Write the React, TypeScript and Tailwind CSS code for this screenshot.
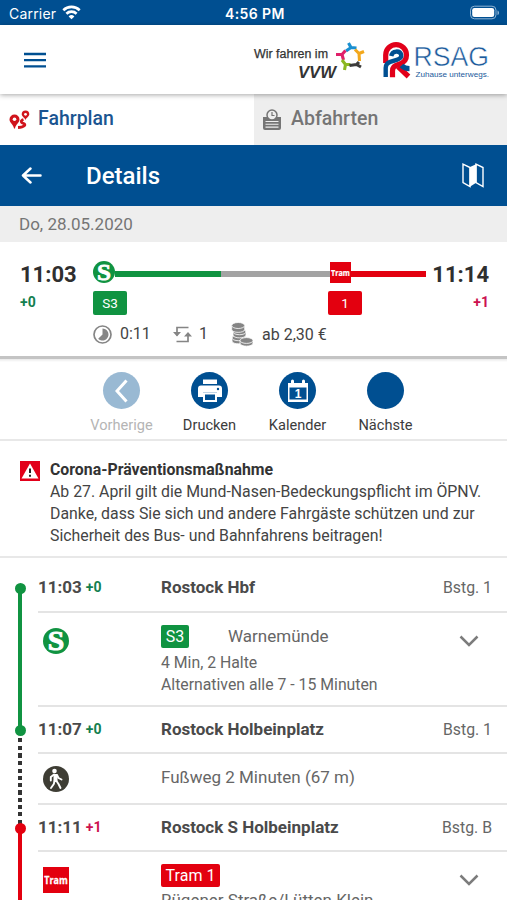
import type { ReactNode } from "react";
import clsx from "clsx";

function StatusBar() {
  return (
    <div className="flex h-[25px] items-center bg-[#004f91] pr-[6px] pl-[9px] font-['Inter',sans-serif] text-white">
      <div className="flex w-[216px] items-center gap-[6px]">
        <span className="pt-[2px] text-[14px] leading-5 tracking-[0.2px]">Carrier</span>
        <svg width="19" height="15" viewBox="0 0 19 15" fill="none" stroke="white" strokeWidth="2.6">
          <path d="M1.3 5.2a11.8 11.8 0 0 1 16.4 0" />
          <path d="M4.4 8.7a7.3 7.3 0 0 1 10.2 0" />
          <path d="M9.5 14.3 6.6 11.4a4.1 4.1 0 0 1 5.8 0Z" fill="white" stroke="none" />
        </svg>
      </div>
      <span className="pt-[2px] text-[14px] font-semibold leading-5 tracking-[0.4px]">4:56 PM</span>
      <div className="flex flex-1 justify-end">
        <svg width="31" height="15" viewBox="0 0 31 15">
          <rect x="0.5" y="1.2" width="25.500" height="12.6" rx="4" fill="none" stroke="#8fb4d4" strokeWidth="1" />
          <rect x="2.200" y="3" width="22" height="9" rx="2.2" fill="white" />
          <path d="M27.500 5.500c2 .6 2 4 0 4.600Z" fill="#8fb4d4" />
        </svg>
      </div>
    </div>
  );
}

function Logos() {
  return (
    <svg width="244" height="50" viewBox="250 34 244 50" fill="none">
      <g fontFamily="Liberation Sans, sans-serif">
        <text x="254" y="56.5" fontSize="12" fill="#333" stroke="#333" strokeWidth="0.25" textLength="74" lengthAdjust="spacingAndGlyphs">Wir fahren im</text>
        <text x="298" y="77" fontSize="17" fontWeight="bold" fontStyle="italic" fill="#333" textLength="38" lengthAdjust="spacingAndGlyphs">VVW</text>
        <text x="413.500" y="65.300" fontSize="27" fill="#1b5a9b" stroke="white" strokeWidth="0.500" textLength="75.500" lengthAdjust="spacingAndGlyphs">RSAG</text>
        <text x="415.500" y="76" fontSize="8" fill="#1b5a9b" textLength="73.500" lengthAdjust="spacingAndGlyphs">Zuhause unterwegs.</text>
      </g>
      <g strokeWidth="3.1" strokeLinejoin="round">
        <path d="M348.500 42 351 46.500 346 50M351 46.500 356.500 47" stroke="#1a8fd0" />
        <path d="M336 53.500 342 53.500 345.500 49.500M342 53.500 343.500 59" stroke="#e0206a" />
        <path d="M344.500 69 345.500 63.500 342 59M345.500 63.500 350.500 63.500" stroke="#8cb822" />
        <path d="M361 66 356.500 63.500 349.500 64.500M356.500 63.500 359 61" stroke="#3c3c3b" />
        <path d="M364 50.500 359 52.500 355 48.500M359 52.500 359.500 60" stroke="#f3a81c" />
      </g>
      <g strokeWidth="5.2">
        <path d="M385.700 62V54a10.300 10.300 0 0 1 20.800 0c0 5-3 8-7.500 9.300-5 1.500-6.500 3-6.500 7v6" stroke="#e2001a" />
        <path d="M398 65.500 408.500 75.500" stroke="#e2001a" />
        <path d="M385.700 76V67c0-3 1-5 4.500-6.200l6.500-2c3.500-1 5-2.500 4.500-5-1.200-4.500-9-4.500-10 1.200" stroke="#004f91" strokeWidth="4.400" />
        <path d="M401.500 64.500c2 2 4.500 3.200 8 3.200" stroke="#004f91" />
      </g>
    </svg>
  );
}

function Header() {
  return (
    <header className="relative z-10 flex h-[69px] items-center justify-between bg-white pr-[13px] pl-6 shadow-[0_1px_5px_rgba(0,0,0,0.35)]">
      <svg width="22" height="16" viewBox="0 0 22 16" stroke="#004f91" strokeWidth="2.300">
        <path d="M0 2h22M0 8.200h22M0 14.300h22" />
      </svg>
      <Logos />
    </header>
  );
}

function Tabs() {
  return (
    <nav className="flex h-[51px] text-[19.500px] font-medium">
      <div className="flex w-[254px] items-center gap-[8px] bg-white pl-[9px] text-[#1b5591]">
        <svg width="21" height="20" viewBox="0 0 21 20">
          <path d="M5.500 4.500a5 5 0 0 0-5 5c0 3.500 4 5 4.500 9h1c.5-4 4.500-5.500 4.500-9a5 5 0 0 0-5-5Z" fill="#d0141c" />
          <circle cx="5.500" cy="9.200" r="1.800" fill="white" />
          <path d="M16.500.5a3.800 3.800 0 0 0-3.800 3.800c0 2.400 3.300 3.500 3.800 6 .5-2.500 3.800-3.600 3.800-6A3.800 3.800 0 0 0 16.500.5Z" fill="#d0141c" />
          <circle cx="16.500" cy="4.300" r="1.400" fill="white" />
          <path d="M14.500 9.500c-3 1-3 3 .2 4 2.500 1 1 3.700-5.700 4" fill="none" stroke="#d0141c" strokeWidth="2.800" />
        </svg>
        <span className="-mt-[2px]">Fahrplan</span>
      </div>
      <div className="flex flex-1 items-center gap-[10px] bg-[#eee] pl-[9px] text-[#757575]">
        <svg width="18" height="21" viewBox="0 0 18 21">
          <path d="M0 8h18v11a2 2 0 0 1-2 2H2a2 2 0 0 1-2-2Z" fill="#757575" />
          <circle cx="9" cy="6" r="5" fill="#eee" stroke="#757575" strokeWidth="1.500" />
          <path d="M9 3v3.500h2.500" fill="none" stroke="#757575" strokeWidth="1.200" />
          <path d="M2.500 12.500h13M2.500 15.300h13M2.500 18.100h13" stroke="#eee" strokeWidth="1.100" />
        </svg>
        <span className="-mt-[2px]">Abfahrten</span>
      </div>
    </nav>
  );
}

function TitleBar() {
  return (
    <div className="flex h-[61px] items-center bg-[#004f91] pr-[23px] pl-[21px] text-white">
      <svg width="21" height="17" viewBox="0 0 21 17" fill="none" stroke="white" strokeWidth="2.500" strokeLinecap="round" strokeLinejoin="round">
        <path d="M9.500 1.500 2 8.500l7.500 7M2 8.500h17.500" />
      </svg>
      <h1 className="ml-[44px] flex-1 text-[24px] font-medium leading-8">Details</h1>
      <svg width="22" height="25" viewBox="0 0 22 25" fill="none" stroke="white" strokeWidth="1.400">
        <path d="M1 1.200 8 4.500v19L1 19.500ZM14 1.200l7 3.300v19l-7-4Z" />
        <path d="M7.500 4.300 14.500 1v18.500l-7 4.500Z" fill="white" stroke="none" />
      </svg>
    </div>
  );
}

function SBahn({ size }: { size: number }) {
  return (
    <svg width={size} height={size} viewBox="0 0 26 26" className="block shrink-0">
      <circle cx="13" cy="13" r="13" fill="#109341" />
      <text x="4.800" y="22" fontSize="27" fontWeight="bold" fontFamily="Liberation Serif, serif" fill="white" stroke="white" strokeWidth="0.900" textLength="16.500" lengthAdjust="spacingAndGlyphs">S</text>
    </svg>
  );
}

function TramSign({ size }: { size: number }) {
  return (
    <svg width={size} height={size} viewBox="0 0 26 26" className="block shrink-0">
      <rect width="26" height="26" fill="#e3000f" />
      <text x="1.300" y="17" fontSize="11.200" fontWeight="bold" fontFamily="Open Sans, sans-serif" fill="white" stroke="white" strokeWidth="0.300" textLength="23.400" lengthAdjust="spacingAndGlyphs">Tram</text>
    </svg>
  );
}

function Summary() {
  return (
    <section className="h-[117px] border-b-[3px] border-[#c4c4c4] bg-white">
      <div className="flex pt-[19px] pr-[18px] pl-[20px]">
        <div className="w-[73px]">
          <div className="text-[22px] font-bold leading-[28px] text-[#2f2f2f]">11:03</div>
          <div className="mt-[6px] text-[14px] font-bold leading-[14px] text-[#137f4f]">+0</div>
        </div>
        <div className="w-[333px]">
          <div className="flex h-[22px] items-center">
            <SBahn size={22} />
            <div className="mt-[3px] h-[6px] w-[106px] bg-[#109341]" />
            <div className="mt-[3px] h-[6px] w-[109px] bg-[#a3a3a3]" />
            <TramSign size={21} />
            <div className="mt-[3px] h-[6px] flex-1 bg-[#e3000f]" />
          </div>
          <div className="mt-[8px] flex h-[24px] gap-[201px] text-[13.500px] leading-[24px] text-white">
            <div className="w-[34px] rounded-[2px] bg-[#109341] text-center">S3</div>
            <div className="w-[34px] rounded-[2px] bg-[#e3000f] text-center">1</div>
          </div>
        </div>
        <div className="flex-1 text-right">
          <div className="text-[22px] font-bold leading-[28px] text-[#2f2f2f]">11:14</div>
          <div className="mt-[6px] text-[14px] font-bold leading-[14px] text-[#cc1150]">+1</div>
        </div>
      </div>
      <div className="mt-[5px] flex h-[28px] items-center pl-[93px] text-[16px] text-[#444]">
        <svg width="19" height="19" viewBox="0 0 19 19">
          <circle cx="9.500" cy="9.500" r="8.500" fill="none" stroke="#858585" strokeWidth="1.700" />
          <path d="M9.500 3.500a6 6 0 1 1-4.300 10.200L9.500 9.500Z" fill="#858585" />
        </svg>
        <span className="ml-[8px] w-[53px]">0:11</span>
        <svg width="19" height="17" viewBox="0 0 19 17" fill="none" stroke="#858585" strokeWidth="1.700">
          <path d="M15.500 1.500H4v8M3.500 15.500h11.500v-8" />
          <path d="M0 6h8L4 10.500ZM11 10.500h8L15 6Z" fill="#858585" stroke="none" />
        </svg>
        <span className="ml-[7px] w-[32px]">1</span>
        <svg width="23" height="25" viewBox="0 0 23 25" fill="#858585" stroke="white" strokeWidth="0.800">
          <path d="M1 16v3c0 3.800 13 3.800 13 0v-3Z" />
          <ellipse cx="7.500" cy="16" rx="6.500" ry="2.700" />
          <path d="M2 10v3c0 3.800 13 3.800 13 0v-3Z" />
          <ellipse cx="8.500" cy="10" rx="6.500" ry="2.700" />
          <path d="M.7 3.500v4c0 3.800 13 3.800 13 0v-4Z" />
          <ellipse cx="7.200" cy="3.500" rx="6.500" ry="3" />
          <path d="M9 18.500v2.500c0 4.200 13 4.200 13 0v-2.500Z" />
          <ellipse cx="15.500" cy="18.500" rx="6.500" ry="2.900" />
        </svg>
        <span className="ml-[8px] pt-[2px]">ab 2,30 €</span>
      </div>
    </section>
  );
}

type ActionProps = {
  label: string;
  disabled?: boolean;
  children?: ReactNode;
};

function Action({ label, disabled, children }: ActionProps) {
  return (
    <button className="flex w-[88px] flex-col items-center">
      <span className={clsx("flex size-[37px] items-center justify-center rounded-full", disabled ? "bg-[#99b9d3]" : "bg-[#004f91]")}>
        {children}
      </span>
      <span className={clsx("mt-[6px] text-[14.600px] leading-[20px]", disabled ? "text-[#b5b5b5]" : "text-[#3c3c3c]")}>{label}</span>
    </button>
  );
}

function Actions() {
  return (
    <section className="flex h-[82px] justify-center border-b-2 border-[#e8e8e8] bg-linear-to-b from-[#e9e9e9] to-white to-[3px] pt-[13px]">
      <Action label="Vorherige" disabled>
        <svg width="13" height="24" viewBox="0 0 13 24" fill="none" stroke="white" strokeWidth="3">
          <path d="M11.500 1.500 2 12l9.500 10.500" />
        </svg>
      </Action>
      <Action label="Drucken">
        <svg width="24" height="23" viewBox="0 0 24 23" fill="white">
          <path d="M5 .5h14V5H5ZM3 6.500h18a3 3 0 0 1 3 3V18h-5v-4.500H5V18H0V9.500a3 3 0 0 1 3-3Z" />
          <path d="M6 14.500h12V22H6Z" fill="none" stroke="white" strokeWidth="2" />
          <circle cx="20" cy="10" r="1.200" fill="#004f91" />
        </svg>
      </Action>
      <Action label="Kalender">
        <svg width="22" height="24" viewBox="0 0 22 24">
          <path d="M1 3h3V1a1 1 0 0 1 3 0v2h8V1a1 1 0 0 1 3 0v2h3v19H1Z" fill="white" transform="translate(0 1)" />
          <path d="M2.500 8.500h17v12h-17Z" fill="#004f91" />
          <text x="11" y="19" textAnchor="middle" fontSize="12" fontWeight="bold" fontFamily="Liberation Sans, sans-serif" fill="white">1</text>
        </svg>
      </Action>
      <Action label="Nächste" />
    </section>
  );
}

function Notice() {
  return (
    <section className="flex h-[117px] border-b-2 border-[#e8e8e8] bg-white pt-[18px] pl-[20px]">
      <svg width="20" height="20" viewBox="0 0 20 20" className="mt-[2px] shrink-0">
        <rect width="20" height="20" fill="#e2001a" />
        <path d="M10 2.500 18.500 17.500h-17Z" fill="white" />
        <path d="M10 7.500v4.500M10 13.800v2" stroke="#222" strokeWidth="2" />
      </svg>
      <div className="ml-[10px] text-[15.850px] leading-[22px] whitespace-nowrap text-[#444]">
        <div className="font-bold text-[#333]">Corona-Präventionsmaßnahme</div>
        <div>Ab 27. April gilt die Mund-Nasen-Bedeckungspflicht im ÖPNV.</div>
        <div>Danke, dass Sie sich und andere Fahrgäste schützen und zur</div>
        <div>Sicherheit des Bus- und Bahnfahrens beitragen!</div>
      </div>
    </section>
  );
}

type Track = "none" | "green" | "walk" | "red";

function Segment({ track }: { track: Track }) {
  return (
    <div
      className={clsx(
        "w-[4px] flex-1",
        track === "green" && "bg-[#109341]",
        track === "red" && "bg-[#e3000f]",
        track === "walk" && "bg-[repeating-linear-gradient(#333_0px,#333_4px,white_4px,white_7.300px)]",
      )}
    />
  );
}

type StopProps = {
  time: string;
  delay: string;
  name: string;
  platform: string;
  above: Track;
  below: Track;
  height: string;
};

function Stop({ time, delay, name, platform, above, below, height }: StopProps) {
  const late = delay !== "+0";
  return (
    <div className={clsx("flex", height)}>
      <div className="relative -mr-[2px] flex w-[40px] flex-col items-center">
        <Segment track={above} />
        <Segment track={below} />
        <span className={clsx("absolute top-[calc(50%-6px)] left-[14.500px] size-[11px] rounded-full", late ? "bg-[#e3000f]" : "bg-[#109341]")} />
      </div>
      <div className="flex flex-1 items-center border-b-2 border-[#e4e4e4] pr-[15px]">
        <div className="flex w-[123px] items-center gap-[4px] font-bold">
          <span className="text-[17px] text-[#4a4a4a]">{time}</span>
          <span className={clsx("text-[14px]", late ? "text-[#cc1150]" : "text-[#137f4f]")}>{delay}</span>
        </div>
        <span className="flex-1 text-[17px] font-bold text-[#4a4a4a]">{name}</span>
        <span className="text-[15.800px] text-[#666]">{platform}</span>
      </div>
    </div>
  );
}

type LegProps = {
  track: Track;
  icon: ReactNode;
  height: string;
  expandable?: boolean;
  children: ReactNode;
};

function Leg({ track, icon, height, expandable, children }: LegProps) {
  return (
    <div className={clsx("flex", height)}>
      <div className="-mr-[2px] flex w-[40px] flex-col items-center">
        <Segment track={track} />
      </div>
      <div className="flex flex-1 border-b-2 border-[#e4e4e4] pr-[28px]">
        <div className="w-[123px] pt-[12px] pl-[5px]">{icon}</div>
        <div className="flex-1 whitespace-nowrap text-[#666]">{children}</div>
        {expandable && (
          <svg width="20" height="12" viewBox="0 0 20 12" className="mt-[22px]" fill="none" stroke="#7c7c7c" strokeWidth="2.500">
            <path d="M1.500 1.500 10 10l8.500-8.500" />
          </svg>
        )}
      </div>
    </div>
  );
}

function Walker() {
  return (
    <svg width="26" height="26" viewBox="0 0 26 26">
      <circle cx="13" cy="13" r="13" fill="#3e3d34" />
      <circle cx="11.500" cy="5" r="2.300" fill="white" />
      <path d="M11 8.500h3v7h-3Z" fill="white" stroke="white" strokeLinejoin="round" />
      <path d="M11 8.500 7.800 11v3.500M14 9l1.500 3 3 1.500M11.500 15 10.800 18l-2.800 4M13.500 15l2 3 2 4" fill="none" stroke="white" strokeWidth="1.900" strokeLinecap="round" strokeLinejoin="round" />
    </svg>
  );
}

function Itinerary() {
  return (
    <section className="bg-white pt-[6px]">
      <Stop time="11:03" delay="+0" name="Rostock Hbf" platform="Bstg. 1" above="none" below="green" height="h-[49px]" />
      <Leg track="green" icon={<div className="pt-[3px]"><SBahn size={26} /></div>} height="h-[94px]" expandable>
        <div className="mt-[12px] flex h-[23px] items-center text-[17px]">
          <span className="w-[28px] rounded-[2px] bg-[#109341] text-center text-[16px] leading-[23px] text-white">S3</span>
          <span className="ml-[39px]">Warnemünde</span>
        </div>
        <div className="mt-[4px] text-[15.800px] leading-[22px]">4 Min, 2 Halte</div>
        <div className="text-[15.800px] leading-[22px]">Alternativen alle 7 - 15 Minuten</div>
      </Leg>
      <Stop time="11:07" delay="+0" name="Rostock Holbeinplatz" platform="Bstg. 1" above="green" below="walk" height="h-[47px]" />
      <Leg track="walk" icon={<Walker />} height="h-[51px]">
        <div className="pt-[11px] text-[17px] leading-6">Fußweg 2 Minuten (67 m)</div>
      </Leg>
      <Stop time="11:11" delay="+1" name="Rostock S Holbeinplatz" platform="Bstg. B" above="walk" below="red" height="h-[47px]" />
      <Leg track="red" icon={<div className="pt-[3px]"><TramSign size={26} /></div>} height="h-[94px]" expandable>
        <div className="mt-[12px] flex h-[23px] items-center text-[16px]">
          <span className="w-[59px] rounded-[2px] bg-[#e3000f] text-center leading-[23px] text-white">Tram 1</span>
        </div>
        <div className="mt-[2px] text-[17px] leading-[22px]">Rügener Straße/Lütten Klein</div>
      </Leg>
    </section>
  );
}

export default function App() {
  return (
    <div className="h-[900px] w-[507px] overflow-hidden bg-white font-['Roboto',sans-serif]">
      <StatusBar />
      <Header />
      <Tabs />
      <TitleBar />
      <div className="h-[36px] bg-[#eee] pl-[19px] text-[17px] leading-[36px] text-[#757575]">Do, 28.05.2020</div>
      <Summary />
      <Actions />
      <Notice />
      <Itinerary />
    </div>
  );
}
